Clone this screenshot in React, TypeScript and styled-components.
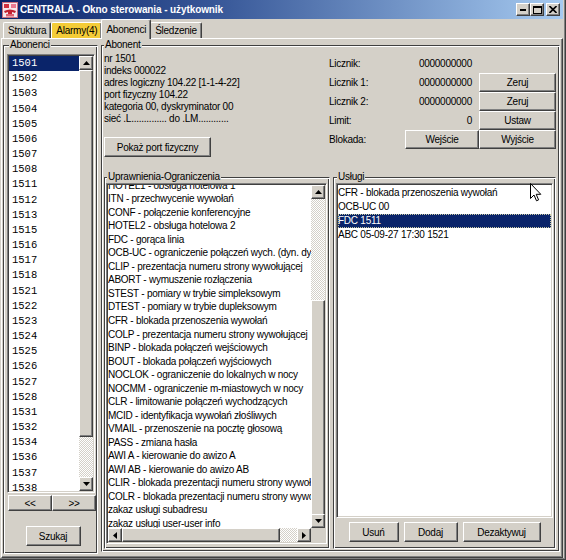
import React from "react";
import styled, { createGlobalStyle, css } from "styled-components";

const GlobalStyle = createGlobalStyle`
  html, body { margin: 0; padding: 0; background: #d4d0c8; }
  body {
    font-family: "Liberation Sans", Arial, sans-serif;
    font-size: 10px;
    letter-spacing: -0.25px;
    color: #000;
  }
  *, *::before, *::after { box-sizing: border-box; }
`;

const raised = css`
  background: #d4d0c8;
  border: 1px solid;
  border-color: #fff #404040 #404040 #fff;
  box-shadow: inset -1px -1px 0 #808080;
`;

const sunken = css`
  border: 1px solid;
  border-color: #808080 #fff #fff #808080;
  box-shadow: inset 1px 1px 0 #404040, inset -1px -1px 0 #d4d0c8;
  padding: 1px;
  background: #fff;
`;

const etched = css`
  margin: 0;
  min-width: 0;
  border: 1px solid;
  border-color: #404040 #fff #fff #404040;
  box-shadow: inset 1px 1px 0 #fff, inset -1px -1px 0 #404040;
`;

const Window = styled.div`
  position: relative;
  width: 566px;
  height: 560px;
  background: #d4d0c8;
  display: flex;
  flex-direction: column;
  padding: 0 3px 2px 0;
  box-shadow: inset -1px -1px 0 #404040, inset -2px -2px 0 #808080;
  overflow: hidden;
`;

const TitleBar = styled.div`
  height: 19px;
  flex: none;
  display: flex;
  align-items: center;
  padding: 0 2px 0 2px;
  background: linear-gradient(to right, #0a246a 0%, #3a5a9a 40%, #a6caf0 100%);
  color: #fff;
`;

const TitleText = styled.div`
  flex: 1;
  margin-left: 2px;
  font-weight: bold;
  font-size: 10px;
  letter-spacing: -0.1px;
  white-space: nowrap;
`;

const CaptionButtons = styled.div`
  display: flex;
  align-items: center;
  margin-right: 1px;
`;

const CaptionButton = styled.div<{ $gap?: number }>`
  ${raised}
  width: 14px;
  height: 13px;
  margin-left: ${(p) => p.$gap ?? 0}px;
  display: flex;
  align-items: center;
  justify-content: center;
`;

const TabStrip = styled.div`
  height: 19px;
  flex: none;
  display: flex;
  align-items: flex-end;
  padding-left: 3px;
  position: relative;
  z-index: 1;
`;

const Tab = styled.div<{ $active?: boolean; $alert?: boolean }>`
  height: ${(p) => (p.$active ? 20 : 16)}px;
  margin: 0 ${(p) => (p.$active ? -1 : 0)}px ${(p) => (p.$active ? -1 : 0)}px;
  padding: 0 4px 0 4px;
  display: flex;
  align-items: center;
  background: ${(p) => (p.$alert ? "#f4cc38" : "#d4d0c8")};
  border-top: 1px solid #fff;
  border-left: 1px solid #fff;
  border-right: 1px solid #404040;
  box-shadow: inset -1px 0 0 #808080;
  border-radius: 2px 2px 0 0;
  position: relative;
  z-index: ${(p) => (p.$active ? 2 : 1)};
  white-space: nowrap;
`;

const TabPanel = styled.div`
  flex: 1;
  min-height: 0;
  display: flex;
  align-items: stretch;
  gap: 3px;
  margin-left: 1px;
  padding: 1px 2px 3px 1px;
  border-top: 1px solid #fff;
  border-left: 1px solid #fff;
  border-right: 1px solid #404040;
  border-bottom: 1px solid #404040;
  box-shadow: inset -1px -1px 0 #808080;
`;

const Legend = styled.legend<{ $inset: number }>`
  margin-left: ${(p) => p.$inset}px;
  padding: 0 1px;
  height: 10px;
  line-height: 10px;
  font-size: 10px;
  background: #d4d0c8;
  white-space: nowrap;
`;

const SideGroup = styled.fieldset`
  ${etched}
  width: 95px;
  flex: none;
  display: flex;
  flex-direction: column;
  padding: 4px 2px 7px 3px;
`;

const ListFrame = styled.div`
  ${sunken}
  flex: 1;
  min-height: 0;
  display: flex;
`;

const NumberList = styled.div`
  flex: 1;
  min-width: 0;
  overflow: hidden;
  font-family: "Liberation Mono", "Courier New", monospace;
  font-size: 10.5px;
  letter-spacing: 0;
`;

const ListRow = styled.div<{ $h: number; $sel?: boolean; $pad?: number; $focus?: boolean }>`
  height: ${(p) => p.$h}px;
  line-height: ${(p) => p.$h}px;
  padding-left: ${(p) => p.$pad ?? 0}px;
  white-space: nowrap;
  background: ${(p) => (p.$sel ? "#0a246a" : "transparent")};
  color: ${(p) => (p.$sel ? "#fff" : "#000")};
  outline: ${(p) => (p.$focus ? "1px dotted #c8c8a0" : "none")};
  outline-offset: -1px;
`;

const VScroll = styled.div`
  width: 14px;
  flex: none;
  display: flex;
  flex-direction: column;
`;

const HScroll = styled.div`
  height: 14px;
  display: flex;
  flex-direction: row;
  min-width: 0;
`;

const ArrowButton = styled.div`
  ${raised}
  width: 14px;
  height: 14px;
  flex: none;
  display: flex;
  align-items: center;
  justify-content: center;
`;

const Track = styled.div<{ $vertical?: boolean }>`
  flex: 1;
  min-width: 0;
  min-height: 0;
  display: flex;
  flex-direction: ${(p) => (p.$vertical ? "column" : "row")};
  background: repeating-conic-gradient(#fff 0 25%, #d4d0c8 0 50%) 0 0 / 2px 2px;
`;

const Thumb = styled.div<{ $vertical?: boolean; $before: number; $size: number }>`
  ${raised}
  flex: none;
  ${(p) =>
    p.$vertical
      ? `margin-top: ${p.$before}px; height: ${p.$size}px;`
      : `margin-left: ${p.$before}px; width: ${p.$size}px;`}
`;

const Button = styled.button<{ $w?: number; $h?: number }>`
  ${raised}
  width: ${(p) => (p.$w ? `${p.$w}px` : "auto")};
  height: ${(p) => p.$h ?? 20}px;
  flex: none;
  padding: 0;
  margin: 0;
  font: inherit;
  letter-spacing: inherit;
  color: #000;
  display: flex;
  align-items: center;
  justify-content: center;
`;

const PagerRow = styled.div`
  display: flex;
  margin-top: 2px;
  padding-left: 1px;
`;

const SearchRow = styled.div`
  display: flex;
  justify-content: center;
  margin-top: 15px;
  padding-left: 4px;
`;

const MainGroup = styled.fieldset`
  ${etched}
  flex: 1;
  display: flex;
  flex-direction: column;
  margin-bottom: 2px;
  padding: 3px 3px 2px 2px;
`;

const TopSection = styled.div`
  height: 119px;
  flex: none;
  display: flex;
`;

const InfoColumn = styled.div`
  width: 225px;
  flex: none;
  display: flex;
  flex-direction: column;
  align-items: flex-start;
`;

const InfoLine = styled.div`
  height: 12px;
  line-height: 12px;
  white-space: nowrap;
`;

const ShowPortButton = styled(Button)`
  margin-top: 12px;
`;

const CounterGrid = styled.div`
  margin-top: 1px;
  display: grid;
  grid-template-columns: 76px 74px 77px;
  grid-auto-rows: 19px;
  align-self: flex-start;
`;

const CounterLabel = styled.div`
  display: flex;
  align-items: center;
`;

const CounterValue = styled.div`
  display: flex;
  align-items: center;
  justify-content: flex-end;
  padding-right: 7px;
`;

const GridButton = styled(Button)<{ $col: number }>`
  grid-column: ${(p) => p.$col};
  width: auto;
  height: 19px;
`;

const BottomRow = styled.div`
  flex: 1;
  min-height: 0;
  display: flex;
  gap: 3px;
`;

const PermGroup = styled.fieldset`
  ${etched}
  width: 226px;
  flex: none;
  display: flex;
  flex-direction: column;
  padding: 1px 2px 4px 1px;
`;

const ServiceGroup = styled.fieldset`
  ${etched}
  flex: 1;
  display: flex;
  flex-direction: column;
  padding: 1px 2px 6px 2px;
`;

const PermFrame = styled.div`
  ${sunken}
  flex: 1;
  min-height: 0;
  display: grid;
  grid-template-columns: minmax(0, 1fr) 14px;
  grid-template-rows: minmax(0, 1fr) 14px;
`;

const Viewport = styled.div`
  overflow: hidden;
  min-width: 0;
  min-height: 0;
`;

const ScrolledList = styled.div<{ $offset: number }>`
  margin-top: ${(p) => p.$offset}px;
`;

const Corner = styled.div`
  background: #d4d0c8;
`;

const ServiceFrame = styled.div`
  ${sunken}
  flex: 1;
  min-height: 0;
  overflow: hidden;
`;

const ServiceButtons = styled.div`
  display: flex;
  justify-content: center;
  gap: 5px;
  margin-top: 4px;
`;

const Cursor = styled.svg`
  position: absolute;
  left: 530px;
  top: 183px;
  pointer-events: none;
`;

const subscribers = [
  "1501", "1502", "1503", "1504", "1505", "1506", "1507", "1508", "1511", "1512",
  "1513", "1515", "1516", "1517", "1518", "1521", "1522", "1523", "1524", "1525",
  "1526", "1527", "1528", "1531", "1532", "1534", "1536", "1537", "1538",
];

const permissions = [
  "HOTEL1 - obsługa hotelowa 1",
  "ITN - przechwycenie wywołań",
  "CONF - połączenie konferencyjne",
  "HOTEL2 - obsługa hotelowa 2",
  "FDC - gorąca linia",
  "OCB-UC - ograniczenie połączeń wych. (dyn. dyskryminator)",
  "CLIP - prezentacja numeru strony wywołującej",
  "ABORT - wymuszenie rozłączenia",
  "STEST - pomiary w trybie simpleksowym",
  "DTEST - pomiary w trybie dupleksowym",
  "CFR - blokada przenoszenia wywołań",
  "COLP - prezentacja numeru strony wywołującej",
  "BINP - blokada połączeń wejściowych",
  "BOUT - blokada połączeń wyjściowych",
  "NOCLOK - ograniczenie do lokalnych w nocy",
  "NOCMM - ograniczenie m-miastowych w nocy",
  "CLR - limitowanie połączeń wychodzących",
  "MCID - identyfikacja wywołań złośliwych",
  "VMAIL - przenoszenie na pocztę głosową",
  "PASS - zmiana hasła",
  "AWI A - kierowanie do awizo A",
  "AWI AB - kierowanie do awizo AB",
  "CLIR - blokada prezentacji numeru strony wywołującej",
  "COLR - blokada prezentacji numeru strony wywołującej",
  "zakaz usługi subadresu",
  "zakaz usługi user-user info",
];

const services = [
  "CFR - blokada przenoszenia wywołań",
  "OCB-UC 00",
  "FDC 1511",
  "ABC 05-09-27 17:30 1521",
];

const info = [
  "nr 1501",
  "indeks 000022",
  "adres logiczny 104.22 [1-1-4-22]",
  "port fizyczny 104.22",
  "kategoria 00, dyskryminator 00",
  "sieć .L.............. do .LM............",
];

type Dir = "up" | "down" | "left" | "right";

const Arrow: React.FC<{ dir: Dir }> = ({ dir }) => {
  const pts: Record<Dir, string> = {
    up: "3.5,0 7,4 0,4",
    down: "0,0 7,0 3.5,4",
    left: "4,0 4,7 0,3.5",
    right: "0,0 4,3.5 0,7",
  };
  const vertical = dir === "up" || dir === "down";
  return (
    <svg width={vertical ? 7 : 4} height={vertical ? 4 : 7} viewBox={vertical ? "0 0 7 4" : "0 0 4 7"}>
      <polygon points={pts[dir]} fill="#000" />
    </svg>
  );
};

const VerticalScrollbar: React.FC<{ before: number; size: number }> = ({ before, size }) => (
  <VScroll>
    <ArrowButton><Arrow dir="up" /></ArrowButton>
    <Track $vertical>
      <Thumb $vertical $before={before} $size={size} />
    </Track>
    <ArrowButton><Arrow dir="down" /></ArrowButton>
  </VScroll>
);

const HorizontalScrollbar: React.FC<{ before: number; size: number }> = ({ before, size }) => (
  <HScroll>
    <ArrowButton><Arrow dir="left" /></ArrowButton>
    <Track>
      <Thumb $before={before} $size={size} />
    </Track>
    <ArrowButton><Arrow dir="right" /></ArrowButton>
  </HScroll>
);

const AppIcon = () => (
  <svg width="16" height="16" viewBox="0 0 16 16">
    <rect x="0.5" y="0.5" width="15" height="15" fill="#f4e8ec" stroke="#c87080" />
    <rect x="2" y="2" width="5" height="4" fill="#d03040" />
    <rect x="9" y="2" width="5" height="4" fill="#e87890" />
    <path d="M2 9 Q8 6 14 9 L13 11 L10 10 L10 12 L6 12 L6 10 L3 11 Z" fill="#c02030" />
    <rect x="4" y="12" width="8" height="2.5" fill="#e06070" />
  </svg>
);

export default function App() {
  return (
    <>
      <GlobalStyle />
      <Window>
        <TitleBar>
          <AppIcon />
          <TitleText>CENTRALA - Okno sterowania - użytkownik</TitleText>
          <CaptionButtons>
            <CaptionButton>
              <svg width="6" height="2" viewBox="0 0 6 2"><rect width="6" height="2" fill="#000" /></svg>
            </CaptionButton>
            <CaptionButton>
              <svg width="9" height="8" viewBox="0 0 9 8">
                <rect x="0.5" y="0.5" width="8" height="7" fill="none" stroke="#000" />
                <rect x="0" y="0" width="9" height="2" fill="#000" />
              </svg>
            </CaptionButton>
            <CaptionButton $gap={2}>
              <svg width="8" height="7" viewBox="0 0 8 7">
                <path d="M0.5 0 L7.5 7 M7.5 0 L0.5 7" stroke="#000" strokeWidth="1.6" />
              </svg>
            </CaptionButton>
          </CaptionButtons>
        </TitleBar>

        <TabStrip>
          <Tab>Struktura</Tab>
          <Tab $alert>Alarmy(4)</Tab>
          <Tab $active>Abonenci</Tab>
          <Tab>Śledzenie</Tab>
        </TabStrip>

        <TabPanel>
          <SideGroup>
            <Legend $inset={2}>Abonenci</Legend>
            <ListFrame>
              <NumberList>
                {subscribers.map((n, i) => (
                  <ListRow key={n} $h={15.18} $pad={3} $sel={i === 0}>
                    {n}
                  </ListRow>
                ))}
              </NumberList>
              <VerticalScrollbar before={0} size={367} />
            </ListFrame>
            <PagerRow>
              <Button $w={44} $h={16}>&lt;&lt;</Button>
              <Button $w={44} $h={16}>&gt;&gt;</Button>
            </PagerRow>
            <SearchRow>
              <Button $w={55} $h={20}>Szukaj</Button>
            </SearchRow>
          </SideGroup>

          <MainGroup>
            <Legend $inset={0}>Abonent</Legend>
            <TopSection>
              <InfoColumn>
                {info.map((line) => (
                  <InfoLine key={line}>{line}</InfoLine>
                ))}
                <ShowPortButton $w={107} $h={20}>Pokaż port fizyczny</ShowPortButton>
              </InfoColumn>
              <CounterGrid>
                <CounterLabel>Licznik:</CounterLabel>
                <CounterValue>0000000000</CounterValue>
                <div />
                <CounterLabel>Licznik 1:</CounterLabel>
                <CounterValue>0000000000</CounterValue>
                <GridButton $col={3}>Zeruj</GridButton>
                <CounterLabel>Licznik 2:</CounterLabel>
                <CounterValue>0000000000</CounterValue>
                <GridButton $col={3}>Zeruj</GridButton>
                <CounterLabel>Limit:</CounterLabel>
                <CounterValue>0</CounterValue>
                <GridButton $col={3}>Ustaw</GridButton>
                <CounterLabel>Blokada:</CounterLabel>
                <GridButton $col={2}>Wejście</GridButton>
                <GridButton $col={3}>Wyjście</GridButton>
              </CounterGrid>
            </TopSection>

            <BottomRow>
              <PermGroup>
                <Legend $inset={1}>Uprawnienia-Ograniczenia</Legend>
                <PermFrame>
                  <Viewport>
                    <ScrolledList $offset={-6.3}>
                      {permissions.map((p) => (
                        <ListRow key={p} $h={13.54}>{p}</ListRow>
                      ))}
                    </ScrolledList>
                  </Viewport>
                  <VerticalScrollbar before={101} size={216} />
                  <HorizontalScrollbar before={0} size={158} />
                  <Corner />
                </PermFrame>
              </PermGroup>

              <ServiceGroup>
                <Legend $inset={1}>Usługi</Legend>
                <ServiceFrame>
                  <ScrolledList $offset={1.3}>
                    {services.map((s, i) => (
                      <ListRow key={s} $h={13.9} $sel={i === 2} $focus={i === 2}>
                        {s}
                      </ListRow>
                    ))}
                  </ScrolledList>
                </ServiceFrame>
                <ServiceButtons>
                  <Button $w={50} $h={20}>Usuń</Button>
                  <Button $w={54} $h={20}>Dodaj</Button>
                  <Button $w={78} $h={20}>Dezaktywuj</Button>
                </ServiceButtons>
              </ServiceGroup>
            </BottomRow>
          </MainGroup>
        </TabPanel>

        <Cursor width="12" height="19" viewBox="0 0 12 19">
          <path d="M0.5 0.5 L0.5 15.5 L4 12 L6.5 17.8 L8.6 16.9 L6.2 11.3 L10.8 11.3 Z" fill="#fff" stroke="#000" strokeWidth="1" strokeLinejoin="miter" />
        </Cursor>
      </Window>
    </>
  );
}
